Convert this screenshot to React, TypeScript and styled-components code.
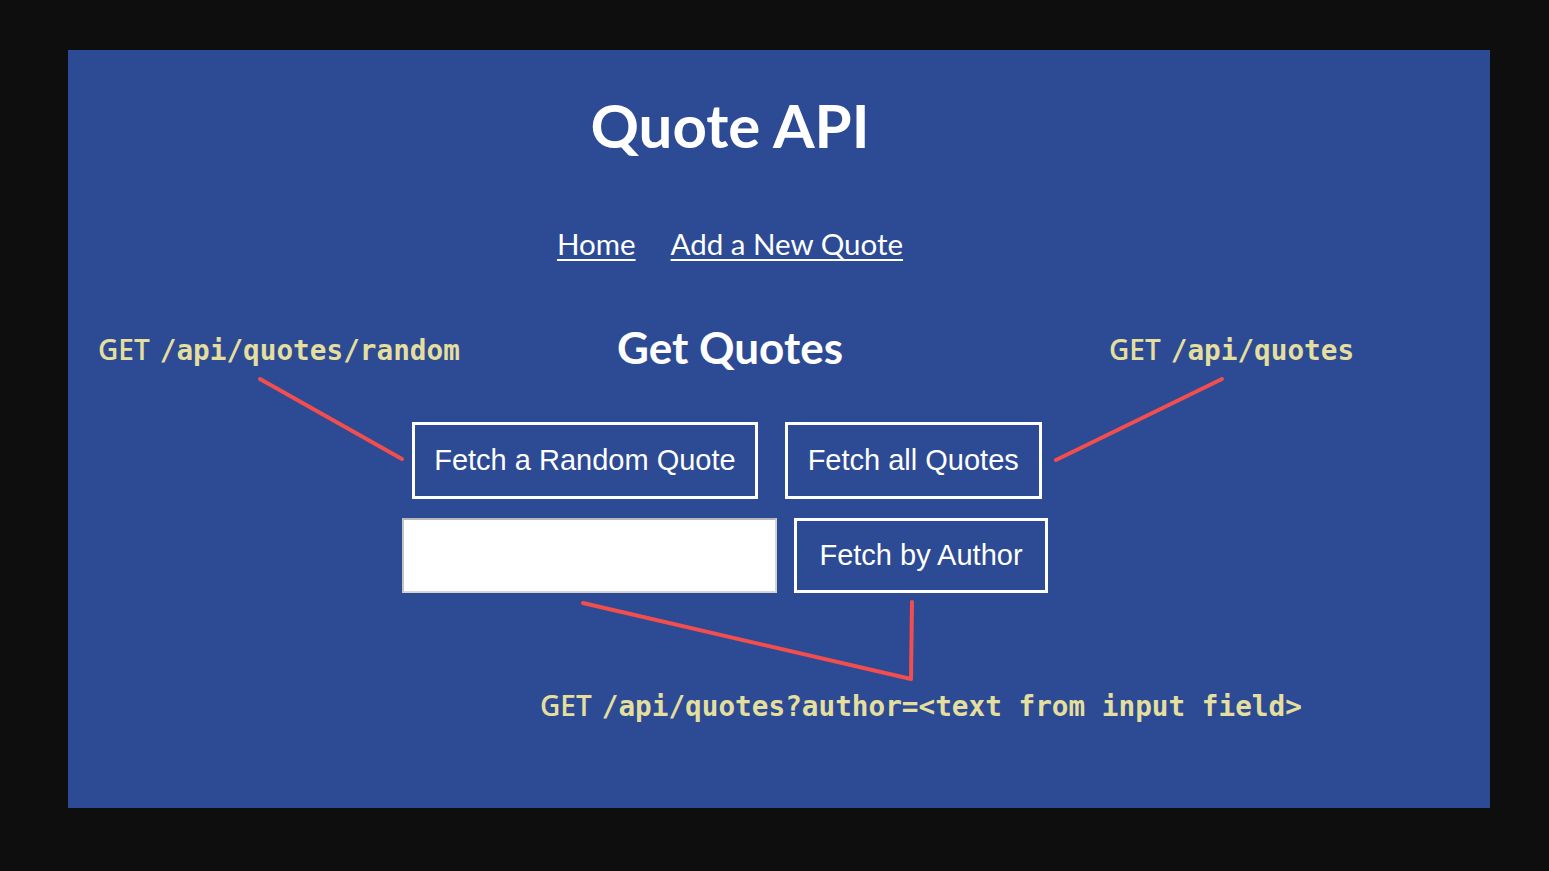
import React from "react";
import styled, { createGlobalStyle } from "styled-components";

const Global = createGlobalStyle`
  html, body { margin: 0; padding: 0; background: #0e0e0e; }
  body { font-family: Lato, "Liberation Sans", sans-serif; }
`;

const Page = styled.div`
  width: 1549px;
  height: 871px;
  box-sizing: border-box;
  padding: 50px 59px 63px 68px;
  background: #0e0e0e;
`;

const Panel = styled.main`
  position: relative;
  height: 758px;
  box-sizing: border-box;
  padding-right: 102px;
  background: #2d4a94;
  color: #ffffff;
  display: flex;
  flex-direction: column;
  align-items: center;
`;

const Title = styled.h1`
  margin: 45px 0 0 4px;
  font-family: Lato, sans-serif;
  font-weight: 700;
  font-size: 60px;
  line-height: 60px;
`;

const Nav = styled.nav`
  margin: 75px 0 0 4px;
  display: flex;
  gap: 35px;
`;

const NavLink = styled.a`
  font-family: Lato, sans-serif;
  font-size: 29.5px;
  line-height: 28px;
  color: #ffffff;
  text-decoration: underline;
  text-underline-offset: 4px;
  text-decoration-thickness: 2px;
`;

const Heading = styled.h2`
  margin: 68px 0 0 4px;
  font-family: Lato, sans-serif;
  font-weight: 700;
  font-size: 44px;
  line-height: 43px;
`;

const Row = styled.div<{ $top: number; $gap: number; $shift: number }>`
  margin-top: ${(p) => p.$top}px;
  margin-right: ${(p) => p.$shift}px;
  display: flex;
  gap: ${(p) => p.$gap}px;
`;

const Button = styled.button<{ $pad: number }>`
  height: 77px;
  box-sizing: border-box;
  padding: 0 ${(p) => p.$pad}px;
  background: transparent;
  border: 3px solid #ffffff;
  color: #ffffff;
  font-family: "Liberation Sans", Arial, sans-serif;
  font-size: 29px;
  line-height: 1;
  cursor: pointer;
`;

const ShortButton = styled(Button)`
  height: 75px;
`;

const TextInput = styled.input`
  width: 375px;
  height: 75px;
  box-sizing: border-box;
  background: #ffffff;
  border: 2px solid #d4d4d4;
  border-top-color: #b8b8b8;
  border-left-color: #c4c4c4;
  outline: none;
  margin: 0;
`;

const Annotation = styled.div<{ $left: number; $top: number }>`
  position: absolute;
  left: ${(p) => p.$left}px;
  top: ${(p) => p.$top}px;
  color: #e4df9e;
  white-space: nowrap;
  line-height: 28px;
  font-size: 28px;
`;

const Method = styled.span`
  font-family: "Open Sans", "Liberation Sans", sans-serif;
  font-weight: 600;
  font-size: 28px;
  margin-right: 10px;
`;

const Path = styled.span`
  font-family: "DejaVu Sans Mono", "Liberation Mono", monospace;
  font-weight: 700;
  font-size: 27.7px;
`;

const Overlay = styled.svg`
  position: absolute;
  inset: 0;
  width: 100%;
  height: 100%;
  pointer-events: none;
`;

export default function App() {
  return (
    <>
      <Global />
      <Page>
        <Panel>
          <Title>Quote API</Title>
          <Nav>
            <NavLink href="#">Home</NavLink>
            <NavLink href="#">Add a New Quote</NavLink>
          </Nav>
          <Heading>Get Quotes</Heading>
          <Row $top={53} $gap={27} $shift={2}>
            <Button $pad={19}>Fetch a Random Quote</Button>
            <Button $pad={20}>Fetch all Quotes</Button>
          </Row>
          <Row $top={19} $gap={17} $shift={6}>
            <TextInput type="text" />
            <ShortButton $pad={22}>Fetch by Author</ShortButton>
          </Row>

          <Annotation $left={30} $top={285}>
            <Method>GET</Method>
            <Path>/api/quotes/random</Path>
          </Annotation>
          <Annotation $left={1041} $top={285}>
            <Method>GET</Method>
            <Path>/api/quotes</Path>
          </Annotation>
          <Annotation $left={472} $top={641}>
            <Method>GET</Method>
            <Path>/api/quotes?author=&lt;text from input field&gt;</Path>
          </Annotation>

          <Overlay viewBox="0 0 1422 758">
            <g stroke="#f24e4e" strokeWidth={4} strokeLinecap="round" strokeLinejoin="round" fill="none">
              <line x1={192} y1={329} x2={334} y2={409} />
              <line x1={1154} y1={329} x2={988} y2={410} />
              <polyline points="515,553 843,629 844,552" />
            </g>
          </Overlay>
        </Panel>
      </Page>
    </>
  );
}
